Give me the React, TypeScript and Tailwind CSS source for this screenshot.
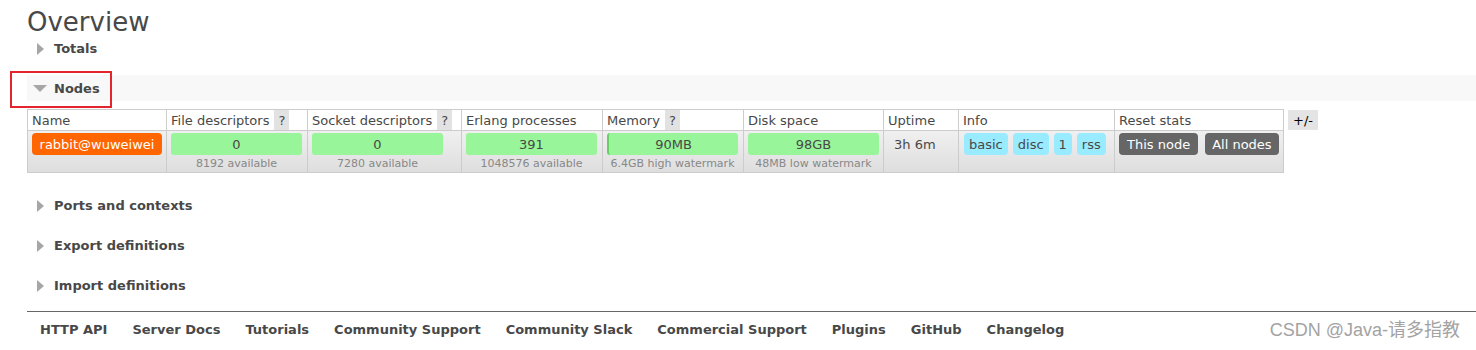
import React from 'react'

function ArrowRight() {
  return (
    <svg width="7" height="12" viewBox="0 0 7 12" className="shrink-0">
      <polygon points="0,0 7,6 0,12" fill="#a6a6a6" />
    </svg>
  )
}

function ArrowDown() {
  return (
    <svg width="14" height="7" viewBox="0 0 14 7" className="shrink-0">
      <polygon points="0,0 14,0 7,7" fill="#a6a6a6" />
    </svg>
  )
}

function Section({ label, className = '' }: { label: string; className?: string }) {
  return (
    <div className={`flex items-center h-[26px] ${className}`}>
      <span className="ml-[10px] mr-[10px] flex">
        <ArrowRight />
      </span>
      <span className="text-[13px] font-bold leading-none">{label}</span>
    </div>
  )
}

interface Col {
  label: string
  w: string
  help?: boolean
}

const COLS: Col[] = [
  { label: 'Name', w: 'w-[139px]' },
  { label: 'File descriptors', w: 'w-[141px]', help: true },
  { label: 'Socket descriptors', w: 'w-[154px]', help: true },
  { label: 'Erlang processes', w: 'w-[141px]' },
  { label: 'Memory', w: 'w-[141px]', help: true },
  { label: 'Disk space', w: 'w-[140px]' },
  { label: 'Uptime', w: 'w-[75px]' },
  { label: 'Info', w: 'w-[156px]' },
  { label: 'Reset stats', w: 'w-[169px]' },
]

function Bar({ value, sub, used }: { value: string; sub: string; used?: boolean }) {
  return (
    <div className="w-[131px]">
      <div
        className={`h-[22px] rounded-[3px] bg-[#99f599] text-center leading-[23px] text-[13px] ${
          used ? 'border-l-[2px] border-[#66d066]' : ''
        }`}
      >
        {value}
      </div>
      <div className="mt-[1px] text-center text-[11px] leading-[15px] text-[#888]">{sub}</div>
    </div>
  )
}

const INFO = ['basic', 'disc', '1', 'rss']
const FOOTER = [
  'HTTP API',
  'Server Docs',
  'Tutorials',
  'Community Support',
  'Community Slack',
  'Commercial Support',
  'Plugins',
  'GitHub',
  'Changelog',
]

export default function App() {
  return (
    <div className="relative w-[1476px] h-[350px] overflow-hidden bg-white text-[#484848] font-['DejaVu_Sans',Verdana,sans-serif]">
      <div className="pl-[27px] pt-[7px]">
        <h1 className="h-[28px] text-[26px] leading-[30px] font-normal">Overview</h1>

        <Section label="Totals" className="pt-px" />

        {/* Nodes */}
        <div className="mt-[14px] flex items-center h-[26px] pt-px bg-[#f8f8f8]">
          <span className="ml-[6px] mr-[7px] flex">
            <ArrowDown />
          </span>
          <span className="text-[13px] font-bold leading-none">Nodes</span>
        </div>

        <div className="mt-[8px] flex items-start">
          <div className="border-l border-t border-[#ccc] text-[13px]">
            <div className="flex border-b border-[#ccc] bg-white">
              {COLS.map(c => (
                <div key={c.label} className={`${c.w} h-[20px] flex border-r border-[#ccc] pl-[4px] leading-[21px]`}>
                  <span>{c.label}</span>
                  {c.help && <span className="ml-[5px] w-[15px] bg-[#e2e2e2] text-center">?</span>}
                </div>
              ))}
            </div>
            <div className="flex border-b border-[#ccc] bg-linear-to-b from-[#f0f0f0] to-[#dedede]">
              <div className="w-[139px] h-[41px] border-r border-[#ccc] pl-[4px] pt-[2px]">
                <div className="w-[130px] h-[22px] rounded-[4px] bg-[#ff6600] text-white text-center leading-[23px]">
                  rabbit@wuweiwei
                </div>
              </div>
              <div className="w-[141px] h-[41px] border-r border-[#ccc] pl-[4px] pt-[2px]">
                <Bar value="0" sub="8192 available" />
              </div>
              <div className="w-[154px] h-[41px] border-r border-[#ccc] pl-[4px] pt-[2px]">
                <Bar value="0" sub="7280 available" />
              </div>
              <div className="w-[141px] h-[41px] border-r border-[#ccc] pl-[4px] pt-[2px]">
                <Bar value="391" sub="1048576 available" />
              </div>
              <div className="w-[141px] h-[41px] border-r border-[#ccc] pl-[4px] pt-[2px]">
                <Bar value="90MB" sub="6.4GB high watermark" used />
              </div>
              <div className="w-[140px] h-[41px] border-r border-[#ccc] pl-[4px] pt-[2px]">
                <Bar value="98GB" sub="48MB low watermark" />
              </div>
              <div className="w-[75px] h-[41px] border-r border-[#ccc] pl-[10px] pt-[2px] leading-[23px]">3h 6m</div>
              <div className="w-[156px] h-[41px] border-r border-[#ccc] pl-[5px] pt-[2px] flex items-start gap-[5px]">
                {INFO.map(t => (
                  <span key={t} className="h-[22px] px-[5px] rounded-[4px] bg-[#99ebff] leading-[23px]">
                    {t}
                  </span>
                ))}
              </div>
              <div className="w-[169px] h-[41px] border-r border-[#ccc] pl-[4px] pt-[2px] flex items-start gap-[7px]">
                <span className="h-[22px] px-[8px] rounded-[4px] bg-[#666] text-white leading-[23px]">This node</span>
                <span className="h-[22px] px-[7px] rounded-[4px] bg-[#666] text-white leading-[23px]">All nodes</span>
              </div>
            </div>
          </div>
          <div className="ml-[4px] mt-[1px] w-[30px] h-[20px] bg-[#e4e4e4] text-center text-[13px] leading-[21px] text-black">
            +/-
          </div>
        </div>

        <Section label="Ports and contexts" className="mt-[19px] pt-px" />
        <Section label="Export definitions" className="mt-[14px] pt-px" />
        <Section label="Import definitions" className="mt-[14px] pt-px" />

        <div className="mt-[13px] border-t border-[#666]">
          <div className="flex items-center h-[34px] pt-px pl-[13px] gap-[25px] text-[13px] font-bold">
            {FOOTER.map(f => (
              <span key={f}>{f}</span>
            ))}
          </div>
        </div>
      </div>

      {/* red highlight annotation */}
      <div className="absolute left-[10px] top-[71px] w-[102px] h-[37px] border-2 border-[#e3262d]" />

      {/* watermark */}
      <div className="absolute right-[16px] top-[319px] text-[18px] leading-[22px] text-[#a3a3a3] font-['Liberation_Sans','Noto_Sans_CJK_SC',sans-serif]">
        CSDN @Java-请多指教
      </div>
    </div>
  )
}
